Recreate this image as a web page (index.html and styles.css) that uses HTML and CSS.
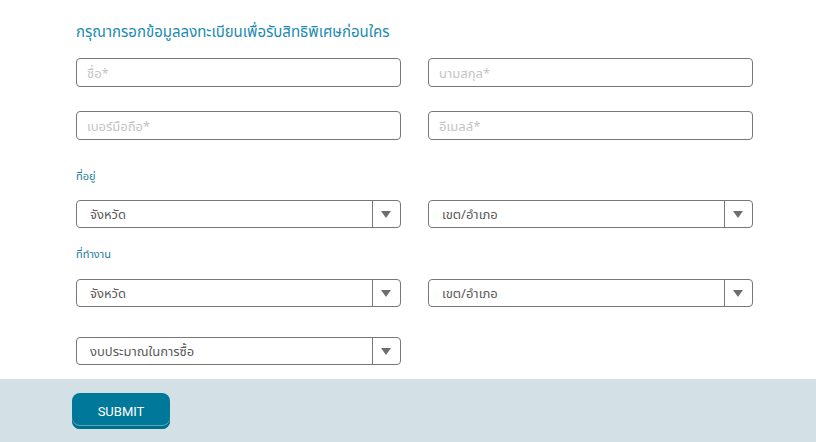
FILE: index.html
```html
<!DOCTYPE html>
<html lang="th">
<head>
  <meta charset="UTF-8">
  <meta name="viewport" content="width=device-width, initial-scale=1.0">
  <title>ลงทะเบียน</title>
  <link rel="stylesheet" href="styles.css">
</head>
<body>
  <!-- Registration form -->
  <form class="register-form">
    <div class="form-body">
      <h2 class="form-title">กรุณากรอกข้อมูลลงทะเบียนเพื่อรับสิทธิพิเศษก่อนใคร</h2>

      <div class="form-row">
        <input class="text-field" type="text" placeholder="ชื่อ*">
        <input class="text-field" type="text" placeholder="นามสกุล*">
      </div>
      <div class="form-row row-gap">
        <input class="text-field" type="tel" placeholder="เบอร์มือถือ*">
        <input class="text-field" type="email" placeholder="อีเมลล์*">
      </div>

      <!-- Home address -->
      <div class="group-label first-label">ที่อยู่</div>
      <div class="form-row">
        <div class="select-box">
          <select><option>จังหวัด</option></select>
          <span class="select-arrow"></span>
        </div>
        <div class="select-box">
          <select><option>เขต/อำเภอ</option></select>
          <span class="select-arrow"></span>
        </div>
      </div>

      <!-- Work address -->
      <div class="group-label">ที่ทำงาน</div>
      <div class="form-row">
        <div class="select-box">
          <select><option>จังหวัด</option></select>
          <span class="select-arrow"></span>
        </div>
        <div class="select-box">
          <select><option>เขต/อำเภอ</option></select>
          <span class="select-arrow"></span>
        </div>
      </div>

      <div class="form-row budget-row">
        <div class="select-box">
          <select><option>งบประมาณในการซื้อ</option></select>
          <span class="select-arrow"></span>
        </div>
      </div>
    </div>

    <!-- Submit bar -->
    <div class="submit-bar">
      <button class="submit-button" type="button">SUBMIT</button>
    </div>
  </form>
</body>
</html>
```

FILE: styles.css
```css
body {
  margin: 0;
  padding: 0;
  background: #fff;
  font-family: "Noto Sans", "Noto Sans Thai", sans-serif;
  overflow: hidden;
}

.register-form {
  margin: 0;
}

.form-body {
  padding: 21px 0 14px 76px;
}

.form-title {
  margin: 0 0 17px 0;
  font-size: 15px;
  line-height: 20px;
  font-weight: normal;
  color: #1b8bb0;
}

/* Two columns of fields */
.form-row {
  display: grid;
  grid-template-columns: 325px 325px;
  column-gap: 27px;
}
.row-gap {
  margin-top: 24px;
}
.budget-row {
  margin-top: 30px;
}

.text-field {
  box-sizing: border-box;
  height: 29px;
  width: 100%;
  margin: 0;
  padding: 0 10px;
  border: 1px solid #777;
  border-radius: 4px;
  font-family: inherit;
  font-size: 13px;
  color: #555;
  background: #fff;
  outline: none;
}
.text-field::placeholder {
  color: #c4c4c4;
}

.group-label {
  margin: 18px 0 17px 0;
  font-size: 11px;
  line-height: 16px;
  color: #1a7d9e;
}
.first-label {
  margin-top: 28px;
  margin-bottom: 16px;
}

/* Custom select with arrow box */
.select-box {
  position: relative;
  box-sizing: border-box;
  height: 28px;
  border: 1px solid #777;
  border-radius: 4px;
  background: #fff;
}
.select-box select {
  appearance: none;
  -webkit-appearance: none;
  box-sizing: border-box;
  width: 100%;
  height: 100%;
  margin: 0;
  padding: 0 40px 0 13px;
  border: none;
  background: transparent;
  font-family: inherit;
  font-size: 13px;
  color: #5a5a5a;
  outline: none;
}
.select-arrow {
  position: absolute;
  top: 0;
  right: 0;
  width: 27px;
  height: 100%;
  border-left: 1px solid #777;
  pointer-events: none;
}
.select-arrow::after {
  content: "";
  position: absolute;
  top: 10px;
  left: 8px;
  border-left: 5px solid transparent;
  border-right: 5px solid transparent;
  border-top: 7px solid #6e6e6e;
}

/* Bottom bar */
.submit-bar {
  background: #d3e1e6;
  height: 63px;
  padding: 14px 0 0 72px;
  box-sizing: border-box;
}
.submit-button {
  width: 98px;
  height: 36px;
  border: none;
  border-radius: 8px;
  background: #00789a;
  box-shadow: inset 0 -3px 0 #006f8e, inset 0 -4px 0 #5ea6bc;
  color: #fff;
  font-family: Roboto, sans-serif;
  font-size: 13px;
  font-weight: normal;
  padding: 0;
  cursor: pointer;
}
```
